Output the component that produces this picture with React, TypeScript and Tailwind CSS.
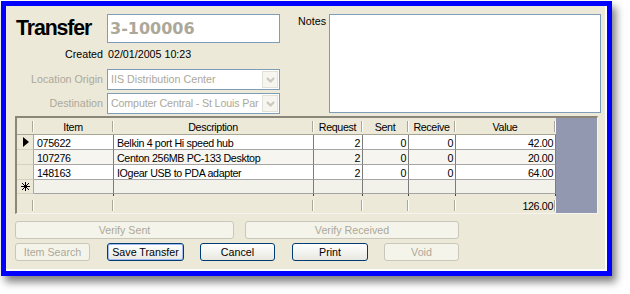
import React from "react";

const Tri = () => (
  <svg width="6" height="10" viewBox="0 0 6 10">
    <polygon points="0,0 6,5 0,10" fill="#000" />
  </svg>
);

const Star = () => (
  <svg width="9" height="9" viewBox="0 0 9 9" stroke="#000" strokeWidth="1" shapeRendering="crispEdges">
    <line x1="4.5" y1="0" x2="4.5" y2="9" />
    <line x1="0" y1="4.5" x2="9" y2="4.5" />
    <line x1="1" y1="1" x2="8" y2="8" />
    <line x1="8" y1="1" x2="1" y2="8" />
  </svg>
);

const Chevron = () => (
  <svg width="9" height="6" viewBox="0 0 9 6">
    <polyline points="1,1 4.5,4.5 8,1" fill="none" stroke="#C9C7BA" strokeWidth="2" />
  </svg>
);

function HSep() {
  return (
    <div className="flex shrink-0">
      <div className="w-px h-[11px] bg-[#ACA899]" />
      <div className="w-px h-[11px] bg-white" />
    </div>
  );
}

function HeadCell({ w, label }: { w: string; label: string }) {
  return (
    <div className={`${w} shrink-0 flex items-center`}>
      <div className="flex-1 text-center leading-[16px] pt-[2px]">{label}</div>
      <HSep />
    </div>
  );
}

function FootCell({ w, text }: { w: string; text?: string }) {
  return (
    <div className={`${w} shrink-0 flex items-center`}>
      <div className="flex-1 text-right pr-[1px] leading-[16px] pt-[1px]">{text}</div>
      <HSep />
    </div>
  );
}

type Row = {
  item: string;
  desc: string;
  req: string;
  sent: string;
  rec: string;
  val: string;
  bg: string;
  marker?: React.ReactNode;
};

function DataRow({ r }: { r: Row }) {
  const c = "shrink-0 border-r border-b border-r-[#7C7C7C] border-b-[#A5A5A5] leading-[14px] pt-[1px]";
  return (
    <div className={`flex h-[15px] ${r.bg}`}>
      <div className="w-[17px] shrink-0 bg-[#ECE9D8] border-r border-b border-r-[#ACA899] border-b-[#D6D2C2] flex items-center pl-[6px]">
        {r.marker}
      </div>
      <div className={`w-[80px] pl-[3px] ${c}`}>{r.item}</div>
      <div className={`w-[200px] pl-[3px] ${c}`}>{r.desc}</div>
      <div className={`w-[49px] text-right pr-[2px] ${c}`}>{r.req}</div>
      <div className={`w-[46px] text-right pr-[2px] ${c}`}>{r.sent}</div>
      <div className={`w-[47px] text-right pr-[2px] ${c}`}>{r.rec}</div>
      <div className={`w-[100px] text-right pr-[2px] ${c}`}>{r.val}</div>
    </div>
  );
}

function TickRow() {
  const c = "shrink-0 border-r border-r-[#404040] h-[2px]";
  return (
    <div className="flex h-[3px] bg-[#ECE9D8]">
      <div className="w-[17px] shrink-0" />
      <div className={`w-[80px] ${c}`} />
      <div className={`w-[200px] ${c}`} />
      <div className={`w-[49px] ${c}`} />
      <div className={`w-[46px] ${c}`} />
      <div className={`w-[47px] ${c}`} />
      <div className={`w-[100px] ${c}`} />
    </div>
  );
}

function Btn({
  w,
  label,
  disabled,
  focus,
}: {
  w: string;
  label: string;
  disabled?: boolean;
  focus?: boolean;
}) {
  if (disabled) {
    return (
      <div
        className={`${w} h-[18px] shrink-0 rounded-[3px] border border-[#C9C7BA] bg-[#F5F4EA] text-[#ACA899] flex items-center justify-center`}
      >
        {label}
      </div>
    );
  }
  return (
    <div
      className={`${w} h-[18px] shrink-0 rounded-[3px] border border-[#003C74] bg-gradient-to-b from-white to-[#E8E7E0] text-black flex items-center justify-center ${
        focus ? "shadow-[inset_0_0_0_1px_#9FBDF0]" : ""
      }`}
    >
      {label}
    </div>
  );
}

export default function App() {
  const rows: Row[] = [
    { item: "075622", desc: "Belkin 4 port Hi speed hub", req: "2", sent: "0", rec: "0", val: "42.00", bg: "bg-white", marker: <Tri /> },
    { item: "107276", desc: "Centon 256MB PC-133 Desktop", req: "2", sent: "0", rec: "0", val: "20.00", bg: "bg-[#F6F5EF]" },
    { item: "148163", desc: "IOgear USB to PDA adapter", req: "2", sent: "0", rec: "0", val: "64.00", bg: "bg-white" },
    { item: "", desc: "", req: "", sent: "", rec: "", val: "", bg: "bg-[#F3F2EA]", marker: <span className="-ml-[2px] flex"><Star /></span> },
  ];

  return (
    <div className="w-[630px] h-[294px] bg-white font-['Liberation_Sans',Arial,sans-serif] text-[10.7px] text-black overflow-hidden">
      <div className="ml-px mt-px w-[611px] h-[275px] border-[5px] border-[#0000FF] bg-[#ECE9D8] shadow-[4px_6px_8px_rgba(0,0,0,0.5)]">
        <div className="h-full border-r-2 border-b-2 border-white flex flex-col pl-[9px] pt-[8px]">
          {/* top section */}
          <div className="flex h-[100px]">
            <div className="w-[265px] shrink-0 flex flex-col">
              <div className="flex h-[29px] items-center">
                <div className="w-[92px] shrink-0 pl-[1px] font-bold text-[21.3px] tracking-[-1.1px] leading-[29px] pb-[1px]">
                  Transfer
                </div>
                <div className="w-[173px] h-[29px] shrink-0 border border-[#7F9DB9] bg-white flex items-center pl-[2px] pt-[1px] font-['DejaVu_Sans',sans-serif] font-bold text-[16px] text-[#ACA899]">
                  3-100006
                </div>
              </div>
              <div className="flex h-[14px] mt-[4px] leading-[14px]">
                <div className="w-[88px] shrink-0 text-right">Created</div>
                <div className="ml-[5px]">02/01/2005 10:23</div>
              </div>
              <div className="flex h-[21px] mt-[8px] items-center">
                <div className="w-[88px] shrink-0 text-right text-[#ACA899]">Location Origin</div>
                <div className="ml-[4px] w-[173px] h-[21px] shrink-0 border border-[#7F9DB9] bg-white flex items-center">
                  <div className="flex-1 pl-[3px] text-[#ACA899] whitespace-nowrap">IIS Distribution Center</div>
                  <div className="w-[16px] h-[17px] mr-px shrink-0 border border-[#E3E1D6] bg-[#F6F5F0] flex items-center justify-center">
                    <Chevron />
                  </div>
                </div>
              </div>
              <div className="flex h-[21px] mt-[3px] items-center">
                <div className="w-[88px] shrink-0 text-right text-[#ACA899]">Destination</div>
                <div className="ml-[4px] w-[173px] h-[21px] shrink-0 border border-[#7F9DB9] bg-white flex items-center">
                  <div className="flex-1 pl-[3px] text-[#ACA899] whitespace-nowrap tracking-[-0.15px]">Computer Central - St Louis Par</div>
                  <div className="w-[16px] h-[17px] mr-px shrink-0 border border-[#E3E1D6] bg-[#F6F5F0] flex items-center justify-center">
                    <Chevron />
                  </div>
                </div>
              </div>
            </div>
            <div className="w-[49px] shrink-0 text-right pr-[3px] leading-[14px]">Notes</div>
            <div className="w-[272px] h-[99px] shrink-0 border border-[#7F9DB9] bg-white" />
          </div>

          {/* grid */}
          <div className="mt-[2px] w-[583px] h-[98px] border-t-2 border-l-2 border-r border-b border-t-[#8A877A] border-l-[#8A877A] border-r-[#F5F4EE] border-b-[#F5F4EE] flex tracking-[-0.35px]">
            <div className="w-[539px] shrink-0 flex flex-col bg-[#ECE9D8]">
              <div className="flex h-[17px] border-b border-b-[#A8A593]">
                <HeadCell w="w-[17px]" label="" />
                <HeadCell w="w-[80px]" label="Item" />
                <HeadCell w="w-[200px]" label="Description" />
                <HeadCell w="w-[49px]" label="Request" />
                <HeadCell w="w-[46px]" label="Sent" />
                <HeadCell w="w-[47px]" label="Receive" />
                <HeadCell w="w-[100px]" label="Value" />
              </div>
              {rows.map((r, i) => (
                <DataRow key={i} r={r} />
              ))}
              <TickRow />
              <div className="flex h-[16px]">
                <FootCell w="w-[17px]" />
                <FootCell w="w-[80px]" />
                <FootCell w="w-[200px]" />
                <FootCell w="w-[49px]" />
                <FootCell w="w-[46px]" />
                <FootCell w="w-[47px]" />
                <FootCell w="w-[100px]" text="126.00" />
              </div>
            </div>
            <div className="flex-1 bg-[#9198B0]" />
          </div>

          {/* buttons */}
          <div className="flex mt-[7px] gap-[11px]">
            <Btn w="w-[219px]" label="Verify Sent" disabled />
            <Btn w="w-[214px]" label="Verify Received" disabled />
          </div>
          <div className="flex mt-[4px]">
            <Btn w="w-[75px]" label="Item Search" disabled />
            <div className="ml-[17px]">
              <Btn w="w-[77px]" label="Save Transfer" focus />
            </div>
            <div className="ml-[16px]">
              <Btn w="w-[75px]" label="Cancel" />
            </div>
            <div className="ml-[17px]">
              <Btn w="w-[76px]" label="Print" />
            </div>
            <div className="ml-[16px]">
              <Btn w="w-[75px]" label="Void" disabled />
            </div>
          </div>
        </div>
      </div>
    </div>
  );
}
